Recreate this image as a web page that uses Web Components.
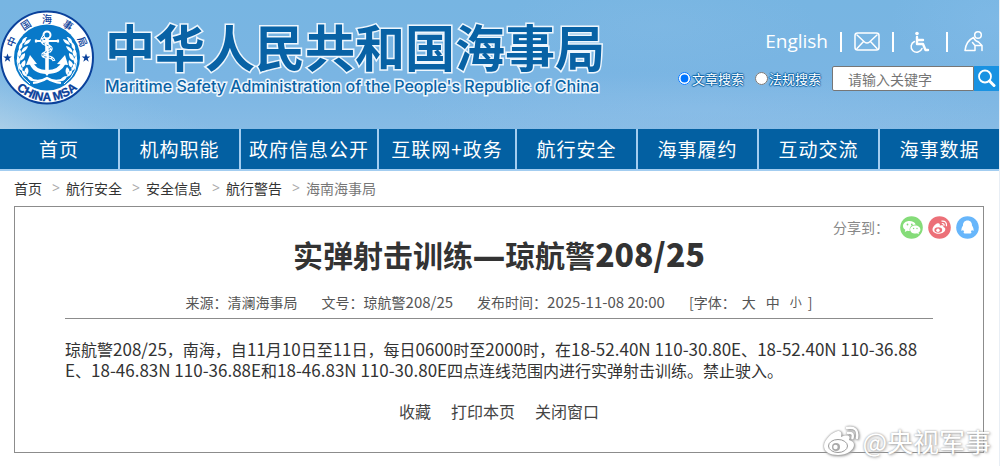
<!DOCTYPE html>
<html lang="zh-CN">
<head>
<meta charset="utf-8">
<title>中华人民共和国海事局</title>
<style>
html { background: #fff; }
body {
  margin: 0;
  font-family: "Noto Sans CJK SC", "Open Sans", sans-serif;
  font-size: 14px;
  color: #333;
  border-right: 1px solid #e8eef5;
}
</style>
</head>
<body>
<site-header>
  <msa-emblem slot="emblem"></msa-emblem>
  <site-brand slot="brand">中华人民共和国海事局<span slot="en">Maritime Safety Administration of the People's Republic of China</span></site-brand>
  <quick-links slot="tools"></quick-links>
  <site-search slot="tools"></site-search>
</site-header>
<main-nav></main-nav>
<crumb-trail></crumb-trail>
<notice-article></notice-article>
<source-mark>@央视军事</source-mark>

<script>
function define(name, html) {
  const template = document.createElement('template');
  template.innerHTML = html;
  customElements.define(name, class extends HTMLElement {
    constructor() {
      super();
      this.attachShadow({ mode: 'open' }).append(template.content.cloneNode(true));
    }
  });
}

define('site-header', `
<style>
:host {
  display: flex; align-items: flex-start; gap: 11px; height: 129px; box-sizing: border-box;
  margin-right: -1px; overflow: hidden;
  background:
    linear-gradient(24deg, rgba(205,225,235,.5) 0, rgba(160,205,235,.25) 45px, transparent 90px),
    radial-gradient(ellipse 300px 40px at 70% 85%, rgba(150,195,235,.3), transparent),
    radial-gradient(ellipse 160px 50px at 66% 20%, rgba(140,190,230,.25), transparent),
    radial-gradient(ellipse 110px 60px at 100% 15%, rgba(135,190,235,.4), transparent),
    linear-gradient(#77b5e2, #7ab5e3 60%, #86bbe5);
}
.tools { margin-left: auto; padding-top: 30px; display: flex; flex-direction: column; align-items: flex-end; gap: 12px; }
</style>
<slot name="emblem"></slot><slot name="brand"></slot>
<div class="tools"><slot name="tools"></slot></div>`);

define('msa-emblem', `
<style>:host{display:block;flex:none;width:94px;padding-top:10px} svg{display:block}</style>
<svg width="95" height="95" viewBox="0 0 95 95" role="img" aria-label="中国海事局">
  <defs>
    <path id="low" d="M3.500 47.500A43.500 43.500 0 0 0 90.500 47.500"/>
    <path id="star" d="M0-4.500 1.100-1.400 4.300-1.400 1.700.500 2.700 3.700 0 1.800-2.700 3.700-1.700.500-4.300-1.400-1.100-1.400Z"/>
    <g id="wreath" fill="#fff">
      <path d="M30 74Q14 62 18 43Q20 34 27 27" fill="none" stroke="#fff" stroke-width="1"/>
      <path d="M26 27q-5 2-4 7q5-2 4-7M22 32q-4 3-3 8q5-3 3-8M20 39q-4 4-1 8q4-3 1-8M18 46q-3 5 1 8q3-4-1-8M19 53q-2 5 3 8q2-5-3-8M22 60q-1 5 5 7q0-5-5-7M27 66q1 5 7 5q-2-5-7-5M31 29q-1 5-7 6q1-5 7-6M28 36q-1 5-7 7q1-6 7-7M25 43q1 5-5 8q-1-6 5-8M25 50q2 5-3 8q-3-5 3-8M27 57q3 4 0 8q-5-4 0-8"/>
    </g>
  </defs>
  <circle cx="47" cy="47.500" r="46" fill="#fff" stroke="#0a419b" stroke-width="2"/>
  <circle cx="47" cy="47.500" r="33" fill="#0879c9"/>
  <use href="#wreath"/><use href="#wreath" transform="matrix(-1 0 0 1 94 0)"/>
  <g fill="none" stroke="#fff">
    <circle cx="47" cy="25" r="3.500" stroke-width="2"/>
    <path d="M35 31H59M36 29.500v3M58 29.500v3" stroke-width="2.200"/>
    <path d="M47 29V60" stroke-width="3.600"/>
    <path d="M31 52Q34 62 47 62Q60 62 64 52" stroke-width="4"/>
    <path d="M30 69Q39 73 47 68Q55 73 64 69M33 73Q41 72 47 68Q53 72 61 73" stroke-width="2.200"/>
    <path d="M44 26q-4 4-1 7q3 2 6 3q4 2 1 5q-5 1-7 3q-1 3 4 3q6 0 7 4" stroke-width="3"/>
    <path d="M44 26q-4 4-1 7q3 2 6 3q4 2 1 5q-5 1-7 3q-1 3 4 3q6 0 7 4" stroke="#0879c9" stroke-width="1" stroke-dasharray="2 2"/>
  </g>
  <path fill="#fff" d="M26 55 30 45 37 54ZM57 54 65 45 68 55ZM42 60 47 66 52 60Z"/>
  <use href="#star" fill="#0a419b" x="7.500" y="48"/><use href="#star" fill="#0a419b" x="86" y="48"/>
  <g fill="#0a419b" font-family="'Noto Sans CJK SC',sans-serif" font-size="10" font-weight="500" text-anchor="middle">
    <text transform="translate(47 47.500) rotate(-66)" y="-35">中</text>
    <text transform="translate(47 47.500) rotate(-33)" y="-35">国</text>
    <text transform="translate(47 47.500)" y="-35">海</text>
    <text transform="translate(47 47.500) rotate(33)" y="-35">事</text>
    <text transform="translate(47 47.500) rotate(66)" y="-35">局</text>
  </g>
  <text fill="#0a419b" stroke="#0a419b" stroke-width=".3" font-family="'Liberation Sans',sans-serif" font-size="12" font-weight="700" text-anchor="middle"><textPath href="#low" startOffset="50%">CHINA MSA</textPath></text>
</svg>`);

define('site-brand', `
<style>
:host { display: block; flex: none; padding-top: 18px; color: #0862a5; white-space: nowrap; }
h1, p { margin: 0; paint-order: stroke fill; -webkit-text-stroke: 3px #eef6fd; }
h1 { font-size: 50px; line-height: 54px; font-weight: 700; }
p { margin-top: 2px; font: 500 16px/24px Inter, "Liberation Sans", sans-serif; }
</style>
<h1><slot></slot></h1><p><slot name="en"></slot></p>`);

define('quick-links', `
<style>
:host { display: flex; align-items: center; height: 24px; padding-right: 14px; color: #fff; }
a { color: inherit; text-decoration: none; display: flex; }
.en { font: 19px/22px "Open Sans", sans-serif; height: 24px; }
i { width: 2px; height: 20px; background: #fff; margin: 0 12px; }
i.wide { margin: 0 16px; }
svg { fill: none; stroke: #fff; stroke-width: 1.5; stroke-linecap: round; stroke-linejoin: round; }
</style>
<a class="en" href="#en">English</a><i></i>
<a href="#mail" aria-label="邮箱"><svg width="26" height="20" viewBox="0 0 26 20"><rect x="1" y="1" width="24" height="17" rx="2.500"/><path d="M3 3 10.500 10Q13 12 15.500 10L23 3M3 16.500 9.500 9.500M23 16.500 16.500 9.500"/></svg></a><i></i>
<a href="#access" aria-label="无障碍"><svg width="24" height="24" viewBox="0 0 24 24"><circle cx="11" cy="3.500" r="1.800" fill="#fff" stroke="none"/><path d="M11 7V14H17L19.500 20H22M11.500 10H17" stroke-width="2.400"/><path d="M8.500 11.500A5.600 5.600 0 1 0 16 18.500"/></svg></a><i class="wide"></i>
<a href="#care" aria-label="长者模式"><svg width="22" height="24" viewBox="0 0 22 24"><circle cx="14" cy="5" r="3.300"/><path d="M9.500 7.500Q2 11 1 20.500H11V15.500L8.500 12.500M9.500 7.500Q11 11 14.500 12L18 15.500V20.500M11 15.500H17"/></svg></a>`);

define('site-search', `
<style>
:host { display: block; padding-right: 1px; }
form { display: flex; align-items: center; height: 25px; margin: 0; }
label { display: flex; align-items: center; gap: 1px; margin-right: 11px; font-size: 13px; line-height: 20px; color: #fff; text-shadow: 1px 0 1px #0a62a5, -1px 0 1px #0a62a5, 0 1px 1px #0a62a5, 0 -1px 1px #0a62a5; }
input[type=radio] { margin: 0; width: 13px; height: 13px; }
input[type=search] { appearance: none; box-sizing: border-box; width: 142px; height: 25px; border: 1px solid #767676; border-radius: 2px 0 0 2px; margin: 0; padding: 0 15px; font: 14px "Noto Sans CJK SC", sans-serif; background: #fff; outline: 0; }
input::placeholder { color: #757575; opacity: 1; }
button { width: 25px; height: 25px; border: 0; padding: 0; background: #1992e2; display: grid; place-items: center; }
</style>
<form>
<label><input type="radio" name="kind" checked>文章搜索</label>
<label><input type="radio" name="kind">法规搜索</label>
<input type="search" placeholder="请输入关键字" aria-label="请输入关键字">
<button type="button" aria-label="搜索"><svg width="19" height="19" viewBox="0 0 19 19" fill="none" stroke="#fff"><circle cx="8" cy="7.500" r="6" stroke-width="1.800"/><path d="M12.500 12 17 16.500" stroke-width="3" stroke-linecap="round"/></svg></button>
</form>`);

define('main-nav', `
<style>
nav { display: grid; grid-template-columns: 118fr 119fr 136fr 136fr 119fr 119fr 119fr 119fr; gap: 2px; background: #a3cdf0; border-bottom: 2px solid #a3cdf0; }
a { background: #0360a2; color: #fff; text-decoration: none; text-align: center; font-size: 19px; line-height: 40px; height: 40px; white-space: nowrap; letter-spacing: 1px; }
</style>
<nav>
<a href="#1">首页</a><a href="#2">机构职能</a><a href="#3">政府信息公开</a><a href="#4">互联网+政务</a><a href="#5">航行安全</a><a href="#6">海事履约</a><a href="#7">互动交流</a><a href="#8">海事数据</a>
</nav>`);

define('crumb-trail', `
<style>
nav { display: flex; padding: 7px 14px 8px; line-height: 20px; }
a { color: #333; text-decoration: none; }
i { width: 24px; box-sizing: border-box; padding-left: 10px; font: 14px/20px "Open Sans", sans-serif; color: #aaa; }
span { color: #777; }
</style>
<nav aria-label="位置"><a href="#1">首页</a><i>&gt;</i><a href="#2">航行安全</a><i>&gt;</i><a href="#3">安全信息</a><i>&gt;</i><a href="#4">航行警告</a><i>&gt;</i><span>海南海事局</span></nav>`);

define('share-bar', `
<style>
:host { display: flex; align-items: center; justify-content: flex-end; gap: 5px; height: 24px; color: #888; }
span { margin-right: 6px; }
a, svg { display: block; }
</style>
<span>分享到：</span>
<a href="#wx" aria-label="微信"><svg width="23" height="23" viewBox="0 0 23 23"><circle cx="11.500" cy="11.500" r="11.300" fill="#85dc79"/><path fill="#fff" d="M9.500 5C5.700 5 3 7.200 3 10c0 1.600.900 2.900 2.300 3.800L4.800 16l2.400-1.200q1.200.300 2.600.300C9 11 11.500 8.700 15.700 8.600 15 6.400 12.500 5 9.500 5Z"/><path fill="#fff" d="M15.300 9.400c-3 0-5.200 1.800-5.200 4s2.200 4.100 5.200 4.100q.9 0 1.700-.2l2 1-.5-1.800c1.200-.8 1.900-1.800 1.900-3.100 0-2.200-2.200-4-5.100-4Z"/><g fill="#85dc79"><circle cx="7.500" cy="8.500" r=".9"/><circle cx="11.800" cy="8.500" r=".9"/><circle cx="13.600" cy="12.500" r=".7"/><circle cx="17" cy="12.500" r=".7"/></g></svg></a>
<a href="#wb" aria-label="微博"><svg width="23" height="23" viewBox="0 0 23 23"><circle cx="11.500" cy="11.500" r="11.300" fill="#ec7078"/><path fill="#fff" d="M9.700 7.200c-2 .3-5.200 3.500-5.200 6.300 0 2.600 2.900 4.200 6 4.200 4 0 6.800-2.300 6.800-4.500 0-1.300-1-1.800-2-2.200.5-1.300.1-2.500-3.500-1.300.4-1.600-.3-2.800-2.100-2.500Z"/><ellipse cx="10.300" cy="14" rx="3.900" ry="2.700" fill="#ec7078"/><circle cx="10" cy="14.200" r="1.700" fill="#fff"/><path d="M13.500 5.200q5.500-.7 5 5M13.800 7.500q2.500-.2 2.300 2.300" fill="none" stroke="#fff" stroke-width="1.200"/></svg></a>
<a href="#qq" aria-label="QQ"><svg width="23" height="23" viewBox="0 0 23 23"><circle cx="11.500" cy="11.500" r="11.300" fill="#67b6fb"/><path fill="#fff" d="M11.500 4.500c-3 0-4.600 2.200-4.500 5-.7 1.200-2 3.300-1.500 5.200.3.600 1-.2 1.500-.9q.3 1.200 1.200 2c-1 .5-1 1.700.8 1.700h5c1.800 0 1.800-1.200.8-1.700q.9-.8 1.200-2c.5.700 1.200 1.500 1.500.9.500-1.900-.8-4-1.500-5.200.1-2.800-1.500-5-4.500-5Z"/></svg></a>`);

define('notice-article', `
<style>
:host { display: block; margin: 0 15px 14px 14px; }
article { border: 1px solid #8c8c8c; padding: 8px 4px 30px; }
h1 { margin: 0; font-size: 30px; line-height: 28px; text-align: center; font-weight: 700; }
h1 b { font-size: 32px; line-height: 28px; }
h1 .dash { font-family: "Noto Sans", sans-serif; }
.meta { margin: 23px 46px 0; height: 26px; display: flex; justify-content: center; gap: 24px; line-height: 20px; border-bottom: 1px solid #8c8c8c; color: #555; white-space: nowrap; }
.meta b { font-weight: 400; font-size: 15px; line-height: 20px; }
.sizes { display: flex; }
.sizes a { margin-left: 10px; }
.sizes a:first-of-type { margin-left: 6px; }
.sizes .small { font-size: 12px; margin-right: 6px; }
a { color: inherit; text-decoration: none; }
.text { margin: 20px 46px 0; font-size: 16px; line-height: 21px; }
.text b { font-weight: 400; font-size: 17px; line-height: 20px; }
.acts { display: flex; justify-content: center; gap: 20px; margin-top: 20px; font-size: 16px; line-height: 21px; color: #444; }
</style>
<article>
<share-bar></share-bar>
<h1>实弹射击训练<b class="dash">—</b>琼航警<b>208/25</b></h1>
<div class="meta"><span>来源：清澜海事局</span><span>文号：琼航警<b>208/25</b></span><span>发布时间：<b>2025-11-08 20:00</b></span><span class="sizes"><span>[字体：</span><a href="#l">大</a><a href="#m">中</a><a class="small" href="#s">小</a><span>]</span></span></div>
<div class="text">琼航警<b>208/25</b>，南海，自<b>11</b>月<b>10</b>日至<b>11</b>日，每日<b>0600</b>时至<b>2000</b>时，在<b>18-52.40N 110-30.80E</b>、<b>18-52.40N 110-36.88</b><br><b>E</b>、<b>18-46.83N 110-36.88E</b>和<b>18-46.83N 110-30.80E</b>四点连线范围内进行实弹射击训练。禁止驶入。</div>
<div class="acts"><a href="#fav">收藏</a><a href="#print">打印本页</a><a href="#close">关闭窗口</a></div>
</article>`);

define('source-mark', `
<style>
:host { position: absolute; right: 9px; bottom: 8px; display: flex; align-items: center; gap: 3px; height: 34px; color: #fff; font-size: 26px; line-height: 34px; text-shadow: 0 0 2px #999, 1px 1px 3px #aaa; }
svg { filter: drop-shadow(0 0 1px #888) drop-shadow(1px 1px 1px #aaa); }
</style>
<svg width="36" height="32" viewBox="0 0 36 32"><path fill="#fff" d="M15 6C9 7 1 15 1 21c0 6 6 9 14 9 9 0 16-5 16-10 0-3-2-4-5-5 2-4-1-6-8-3 1-4 0-6-3-6Z"/><ellipse cx="15" cy="21" rx="9.500" ry="6.500" fill="none" stroke="#999" stroke-width="1"/><circle cx="13" cy="22" r="4" fill="#aaa"/><circle cx="12.500" cy="22" r="2.200" fill="#fff"/><path d="M24 3Q36 1 34 13M25 8Q31 7 29.500 13" fill="none" stroke="#fff" stroke-width="2.400" stroke-linecap="round"/></svg>
<slot></slot>`);
</script>
</body>
</html>
